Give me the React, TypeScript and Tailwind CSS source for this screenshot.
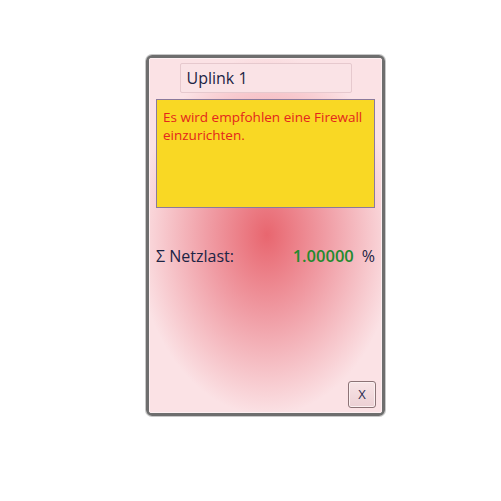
import React from "react";

export default function App() {
  return (
    <div className="w-[501px] h-[501px] bg-white relative" style={{ fontFamily: '"Open Sans", "Noto Sans", sans-serif' }}>
      <div className="absolute left-[146px] top-[55px] w-[239px] h-[361px] rounded-[6px] border-[3px] border-[#6e6e6e] shadow-[0_0_0_1px_#c8c8c8] overflow-hidden">
        <div className="w-full h-full flex flex-col bg-[#fbe2e5] bg-[radial-gradient(ellipse_130px_180px_at_117px_176px,#e8666f_0%,#f09ca4_45%,#fbe2e5_100%)] border border-[#fdeff1]">
          <div className="mt-[4px] mx-auto w-[172px] h-[30px] border border-[#e6c9ce] rounded-[2px] bg-[#fae3e6] flex items-center px-[6px] text-[16px] text-[#1c2444]">
            Uplink 1
          </div>
          <div className="mt-[6px] mx-[6px] h-[109px] bg-[#f9d824] border border-[#8a7a9c] px-[6px] pt-[8px] text-[13.5px] leading-[18px] text-[#e4261c]">
            Es wird empfohlen eine Firewall einzurichten.
          </div>
          <div className="mt-[37px] mx-[6px] flex items-center text-[16px] h-[22px]">
            <span className="text-[#1c2444]">Σ Netzlast:</span>
            <span className="ml-auto font-semibold text-[16.5px] text-[#238a2e]">1.00000</span>
            <span className="ml-[8px] text-[#1c2444]">%</span>
          </div>
          <div className="flex-1" />
          <div className="flex justify-end mr-[5px] mb-[4px]">
            <button className="w-[28px] h-[27px] rounded-[3px] border border-[#8c7376] bg-gradient-to-b from-[#f8e4e6] to-[#ecd0d4] text-[13px] text-[#2a2a50] flex items-center justify-center shadow-[inset_0_0_0_1px_#fbeff0]">
              X
            </button>
          </div>
        </div>
      </div>
    </div>
  );
}
